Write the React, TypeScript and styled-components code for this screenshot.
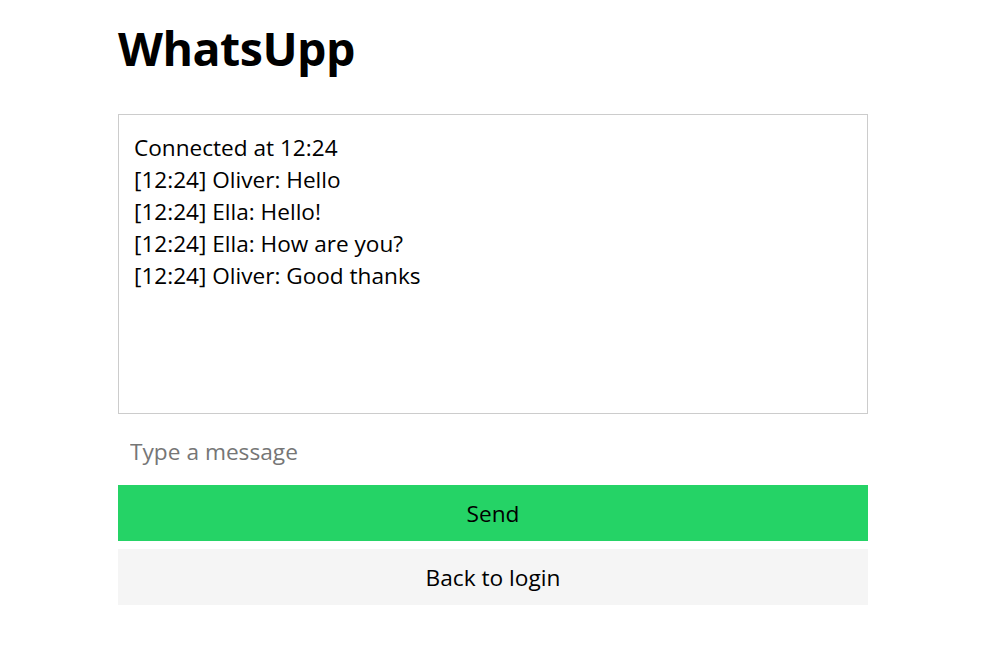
import React from "react";
import styled, { createGlobalStyle } from "styled-components";

const GlobalStyle = createGlobalStyle`
  html, body { margin: 0; padding: 0; background: #ffffff; }
  body { font-family: "Open Sans", "Noto Sans", sans-serif; color: #000; }
`;

const Page = styled.div`
  display: flex;
  justify-content: center;
  padding-right: 4px;
`;

const Container = styled.main`
  width: 750px;
  display: flex;
  flex-direction: column;
  gap: 8px;
`;

const Title = styled.h1`
  margin: 16px 0 26px;
  font-size: 46.5px;
  line-height: 64px;
  font-weight: 700;
  letter-spacing: -0.5px;
`;

const ChatBox = styled.div`
  box-sizing: border-box;
  height: 300px;
  border: 1px solid #cccccc;
  padding: 17px 15px 15px;
  font-size: 22.6px;
  line-height: 32px;
  overflow-y: auto;
`;

const Line = styled.div`
  white-space: pre-wrap;
`;

const MessageInput = styled.input`
  box-sizing: border-box;
  height: 55px;
  border: none;
  outline: none;
  padding: 4px 12px 0;
  font-family: inherit;
  font-size: 22.7px;
  color: #000;
  background: transparent;
  &::placeholder { color: #767676; }
`;

const Button = styled.button<{ $primary?: boolean }>`
  box-sizing: border-box;
  height: 56px;
  border: none;
  font-family: inherit;
  font-size: 22.7px;
  color: #000;
  cursor: pointer;
  background: ${(p) => (p.$primary ? "#25d366" : "#f5f5f5")};
`;

const lines = [
  "Connected at 12:24",
  "[12:24] Oliver: Hello",
  "[12:24] Ella: Hello!",
  "[12:24] Ella: How are you?",
  "[12:24] Oliver: Good thanks",
];

export default function App() {
  return (
    <>
      <GlobalStyle />
      <Page>
        <Container>
          <Title>WhatsUpp</Title>
          <ChatBox>
            {lines.map((l, i) => (
              <Line key={i}>{l}</Line>
            ))}
          </ChatBox>
          <MessageInput placeholder="Type a message" />
          <Button $primary>Send</Button>
          <Button>Back to login</Button>
        </Container>
      </Page>
    </>
  );
}
